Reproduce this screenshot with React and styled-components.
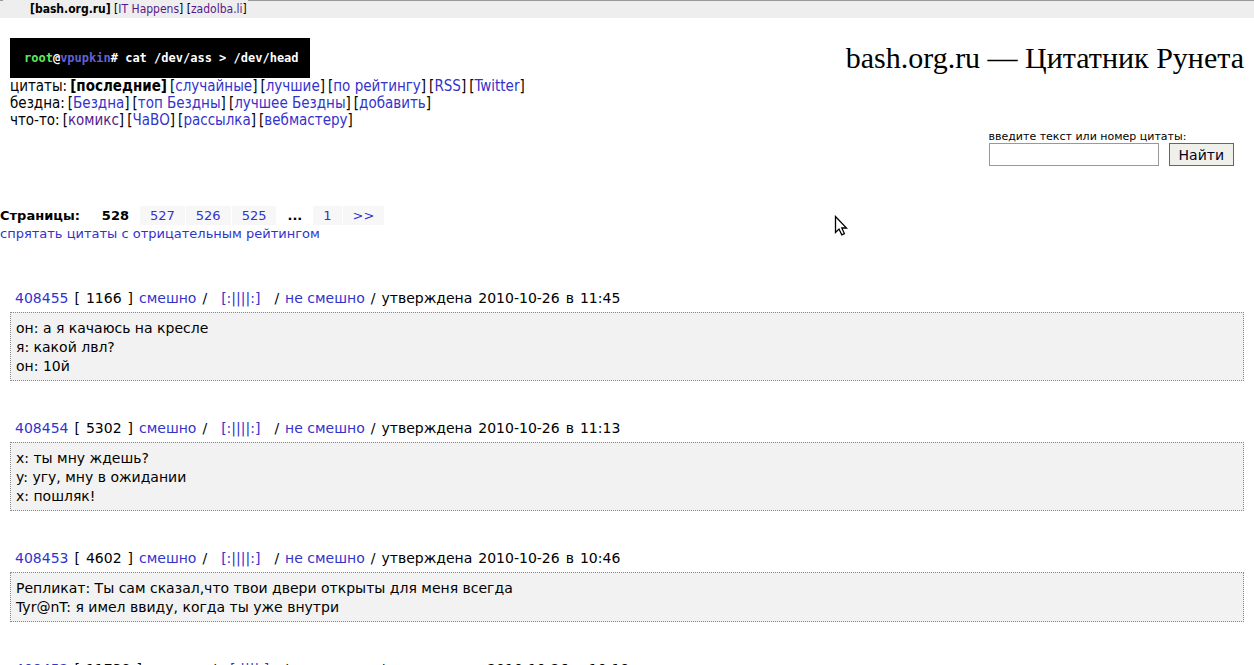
import React, { useState } from "react";
import styled, { createGlobalStyle } from "styled-components";

const GlobalStyle = createGlobalStyle`
  body {
    margin: 0;
    background: white;
    color: black;
    font-family: "DejaVu Sans", Verdana, sans-serif;
    font-size: 14px;
    overflow: hidden;
  }
`;

const NAV = [
  {
    title: "цитаты",
    items: [
      { text: "последние", current: true },
      { text: "случайные" },
      { text: "лучшие" },
      { text: "по рейтингу" },
      { text: "RSS" },
      { text: "Twitter" },
    ],
  },
  {
    title: "бездна",
    items: [
      { text: "Бездна" },
      { text: "топ Бездны" },
      { text: "лучшее Бездны" },
      { text: "добавить" },
    ],
  },
  {
    title: "что-то",
    items: [
      { text: "комикс", visited: true },
      { text: "ЧаВО" },
      { text: "рассылка" },
      { text: "вебмастеру" },
    ],
  },
];

const QUOTES = [
  {
    id: 408455,
    rating: 1166,
    date: "2010-10-26",
    time: "11:45",
    lines: ["он: а я качаюсь на кресле", "я: какой лвл?", "он: 10й"],
  },
  {
    id: 408454,
    rating: 5302,
    date: "2010-10-26",
    time: "11:13",
    lines: ["x: ты мну ждешь?", "y: угу, мну в ожидании", "x: пошляк!"],
  },
  {
    id: 408453,
    rating: 4602,
    date: "2010-10-26",
    time: "10:46",
    lines: [
      "Репликат: Ты сам сказал,что твои двери открыты для меня всегда",
      "Tyr@nT: я имел ввиду, когда ты уже внутри",
    ],
  },
  {
    id: 408452,
    rating: 11738,
    date: "2010-10-26",
    time: "10:18",
    lines: [],
  },
];

const Quote = ({ quote }) => (
  <StyledQuote>
    <StyledQuoteHead>
      <StyledLink href="#">{quote.id}</StyledLink>
      <span>[</span>
      <span>{quote.rating}</span>
      <span>]</span>
      <StyledLink href="#">смешно</StyledLink>
      <span>/</span>
      <StyledBayan href="#">[:||||:]</StyledBayan>
      <span>/</span>
      <StyledLink href="#">не смешно</StyledLink>
      <span>/</span>
      <span>утверждена</span>
      <span>{quote.date}</span>
      <span>в</span>
      <span>{quote.time}</span>
    </StyledQuoteHead>
    <StyledQuoteBody>
      {quote.lines.map((line) => (
        <div key={line}>{line}</div>
      ))}
    </StyledQuoteBody>
  </StyledQuote>
);

const App = () => {
  const [query, setQuery] = useState("");

  return (
    <StyledPage>
      <GlobalStyle />
      <StyledTopBar>
        <b>[bash.org.ru]</b> [<StyledLink href="#" $visited>IT Happens</StyledLink>] [
        <StyledLink href="#" $visited>zadolba.li</StyledLink>]
      </StyledTopBar>

      <StyledHeader>
        <div>
          <StyledLogo>
            <StyledPrompt $color="#5bea5b">root</StyledPrompt>@
            <StyledPrompt $color="#6060d8">vpupkin</StyledPrompt># cat /dev/ass &gt; /dev/head
          </StyledLogo>
          <nav>
            {NAV.map((row) => (
              <StyledNavRow key={row.title}>
                <span>{row.title}:</span>
                {row.items.map((item) =>
                  item.current ? (
                    <b key={item.text}>[{item.text}]</b>
                  ) : (
                    <span key={item.text}>
                      [<StyledLink href="#" $visited={item.visited}>{item.text}</StyledLink>]
                    </span>
                  )
                )}
              </StyledNavRow>
            ))}
          </nav>
        </div>
        <StyledTitle>bash.org.ru — Цитатник Рунета</StyledTitle>
      </StyledHeader>

      <StyledSearch onSubmit={(e) => e.preventDefault()}>
        <div>
          <StyledLabel htmlFor="query">введите текст или номер цитаты:</StyledLabel>
          <StyledSearchRow>
            <StyledInput id="query" value={query} onChange={(e) => setQuery(e.target.value)} />
            <StyledButton type="submit">Найти</StyledButton>
          </StyledSearchRow>
        </div>
      </StyledSearch>

      <StyledPager>
        <StyledPagerTitle>Страницы:</StyledPagerTitle>
        <StyledPageCurrent>528</StyledPageCurrent>
        <StyledPageLink href="#">527</StyledPageLink>
        <StyledPageLink href="#">526</StyledPageLink>
        <StyledPageLink href="#">525</StyledPageLink>
        <StyledPageCurrent>...</StyledPageCurrent>
        <StyledPageLink href="#">1</StyledPageLink>
        <StyledPageLink href="#">&gt;&gt;</StyledPageLink>
      </StyledPager>
      <StyledHide>
        <StyledLink href="#">спрятать цитаты с отрицательным рейтингом</StyledLink>
      </StyledHide>

      <StyledQuotes>
        {QUOTES.map((quote) => (
          <Quote key={quote.id} quote={quote} />
        ))}
      </StyledQuotes>

      <StyledPointer width="14" height="22" viewBox="0 0 14 22">
        <path
          d="M1.5 1.5V17.5L5 14L7.8 19.8L10.4 18.6L7.8 13H12.5Z"
          fill="white"
          stroke="black"
          strokeWidth="1.3"
        />
      </StyledPointer>
    </StyledPage>
  );
};

const StyledPage = styled.div`
  position: relative;
  height: 100vh;
  overflow: hidden;
`;

const StyledLink = styled.a`
  color: ${(props) => (props.$visited ? "#551a8b" : "#3333cc")};
  text-decoration: none;
`;

const StyledTopBar = styled.div`
  box-sizing: border-box;
  height: 18px;
  padding: 1px 0 0 30px;
  background:
    linear-gradient(#eeeeee, #eeeeee) 3px 0 / 245px 1px no-repeat,
    linear-gradient(#999999, #999999) 0 0 / 100% 1px no-repeat,
    #eeeeee;
  font-family: "DejaVu Sans Condensed", "DejaVu Sans", sans-serif;
  font-stretch: condensed;
  font-size: 12px;
  line-height: 17px;
`;

const StyledHeader = styled.div`
  display: flex;
  justify-content: space-between;
  align-items: flex-start;
  padding: 20px 10px 0;
`;

const StyledLogo = styled.div`
  width: 300px;
  height: 40px;
  box-sizing: border-box;
  padding-left: 14px;
  background: black;
  color: white;
  font-family: "DejaVu Sans Mono", monospace;
  font-size: 12px;
  font-weight: bold;
  line-height: 40px;
  white-space: nowrap;
`;

const StyledPrompt = styled.span`
  color: ${(props) => props.$color};
`;

const StyledNavRow = styled.div`
  display: flex;
  gap: 3px;
  font-family: "DejaVu Sans Condensed", "DejaVu Sans", sans-serif;
  font-stretch: condensed;
  font-size: 15px;
  line-height: 17px;
`;

const StyledTitle = styled.h1`
  margin: 0;
  font-family: Georgia, "Liberation Serif", serif;
  font-size: 30px;
  font-weight: normal;
  line-height: 40px;
`;

const StyledSearch = styled.form`
  display: flex;
  justify-content: flex-end;
  padding: 0 20px;
`;

const StyledSearchRow = styled.div`
  display: flex;
  gap: 10px;
`;

const StyledLabel = styled.label`
  display: block;
  padding-top: 2px;
  font-size: 11px;
  line-height: 12px;
`;

const StyledInput = styled.input`
  box-sizing: border-box;
  width: 170px;
  height: 23px;
  padding: 0 4px;
  border: 1px solid #999999;
  background: white;
  font-family: inherit;
  font-size: 14px;
`;

const StyledButton = styled.button`
  box-sizing: border-box;
  height: 23px;
  padding: 0 9px;
  border: 1px solid #666666;
  background: #f0f0ea;
  color: #000022;
  font-family: inherit;
  font-size: 14px;
`;

const StyledPager = styled.div`
  display: flex;
  gap: 1px;
  margin-top: 40px;
  font-size: 13px;
  line-height: 19px;
`;

const StyledPagerTitle = styled.b`
  padding-right: 11px;
`;

const StyledPageCurrent = styled.b`
  padding: 0 10px;
`;

const StyledPageLink = styled(StyledLink)`
  padding: 0 10px;
  background: #f7f7f7;
`;

const StyledHide = styled.div`
  font-size: 13px;
  line-height: 18px;
`;

const StyledQuotes = styled.div`
  padding: 46px 10px 0;
`;

const StyledQuote = styled.div`
  margin-bottom: 38px;
`;

const StyledQuoteHead = styled.div`
  display: flex;
  gap: 6px;
  padding: 0 5px 4px;
  line-height: 19px;
`;

const StyledBayan = styled(StyledLink)`
  padding: 0 8px;
`;

const StyledQuoteBody = styled.div`
  padding: 6px 5px 4px;
  border: 1px dotted #888888;
  background: #f2f2f2;
  line-height: 19px;
`;

const StyledPointer = styled.svg`
  position: absolute;
  left: 834px;
  top: 215px;
`;

export default App;
